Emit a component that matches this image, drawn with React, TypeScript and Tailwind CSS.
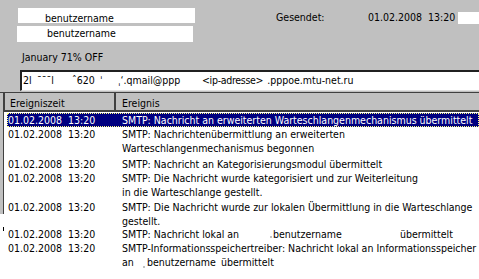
import React from 'react'

type Row = {
  date: string
  lines: React.ReactNode[]
  box: string
}

const Dot = ({ className }: { className: string }) => (
  <span className={`inline-block w-[2px] h-[2px] bg-[#c0c0c0] ${className}`} />
)

const rows: Row[] = [
  {
    date: '01.02.2008  13:20',
    lines: ['SMTP: Nachrichtenübermittlung an erweiterten', 'Warteschlangenmechanismus begonnen'],
    box: 'pb-[2px]',
  },
  {
    date: '01.02.2008  13:20',
    lines: ['SMTP: Nachricht an Kategorisierungsmodul übermittelt'],
    box: '',
  },
  {
    date: '01.02.2008  13:20',
    lines: ['SMTP: Die Nachricht wurde kategorisiert und zur Weiterleitung', 'in die Warteschlange gestellt.'],
    box: 'pb-[1px]',
  },
  {
    date: '01.02.2008  13:20',
    lines: ['SMTP: Die Nachricht wurde zur lokalen Übermittlung in die Warteschlange', 'gestellt.'],
    box: 'h-[27px]',
  },
  {
    date: '01.02.2008  13:20',
    lines: [
      <span className='flex items-end'>
        <span className='w-[148px]'>SMTP: Nachricht lokal an</span>
        <Dot className='mb-[3px] mr-[1px]' />
        <span className='w-[127px]'>benutzername</span>
        <span>übermittelt</span>
      </span>,
    ],
    box: '',
  },
  {
    date: '01.02.2008  13:20',
    lines: [
      'SMTP-Informationsspeichertreiber: Nachricht lokal an Informationsspeicher',
      <span className='flex items-end'>
        <span className='w-[21px]'>an</span>
        <Dot className='mb-[1px] mr-[2px]' />
        <span className='w-[74px]'>benutzername</span>
        <span>übermittelt</span>
      </span>,
    ],
    box: '',
  },
]

export default function App() {
  return (
    <div className="w-[479px] h-[279px] overflow-hidden bg-[#c0c0c0] text-black text-[10.5px] leading-[14px] font-['DejaVu_Sans_Condensed','Liberation_Sans',sans-serif] flex flex-col">
      {/* Kopf */}
      <div className='flex pt-[8px]'>
        <div className='flex flex-col pl-[17px] gap-[3px]'>
          <div className='ml-[1px] w-[177px] h-[15px] bg-white pl-[27px] pt-[3px] whitespace-nowrap'>benutzername</div>
          <div className='w-[176px] h-[16px] bg-white pl-[30px] whitespace-nowrap'>benutzername</div>
        </div>
        <div className='flex items-start ml-[81px] pt-[2px] whitespace-nowrap'>
          <span className='w-[92px]'>Gesendet:</span>
          <span className='w-[90px]'>01.02.2008&nbsp;&nbsp;13:20</span>
          <span className='w-[21px] h-[12px] mt-[2px] bg-white' />
        </div>
      </div>

      <div className='pl-[22px] mt-[8px]'>January 71% OFF</div>

      {/* Absenderzeile */}
      <div className='ml-[20px] mt-[6px] h-[21px] bg-white border-t-2 border-l-2 border-t-[#202020] border-l-[#202020] border-b border-b-[#dfdfdf] pl-[1px] pt-[1px] flex whitespace-nowrap'>
        <span className='w-[14px]'>2l</span>
        <span className='w-[35px]'>ˉˉˉl</span>
        <span className='w-[28px]'>ˆ620</span>
        <span className='w-[18px]'>ˈ</span>
        <span className='w-[84px]'>ˌ‘.qmail@ppp</span>
        <span className='tracking-[-0.3px]'>&lt;ip-adresse&gt;</span>
        <span className='ml-[4px]'>.pppoe.mtu-net.ru</span>
      </div>

      {/* Ereignisliste */}
      <div className='flex flex-1 mt-[1px] border-t border-[#404040]'>
        <div className='w-[4px] flex flex-col'>
          <div className='h-[121px] bg-[#c0c0c0] border-r border-[#404040]' />
          <div className='flex-1 bg-white pt-[13px]'>
            <div className='ml-[3px] w-[1px] h-[4px] bg-black' />
          </div>
        </div>
        <div className='flex-1 bg-white flex flex-col overflow-hidden'>
          <div className='flex h-[19px] bg-[#c0c0c0] border-b-2 border-[#404040] pt-[3px] shrink-0'>
            <div className='w-[112px] pl-[5px] border-l border-r-2 border-[#404040] -mt-[3px] pt-[3px]'>Ereigniszeit</div>
            <div className='pl-[6px]'>Ereignis</div>
          </div>

          <div className='pt-[1px] pl-[3px]'>
            <div className='flex h-[14px] bg-[#000080] text-white outline-1 outline-dotted outline-[#ffff80] -outline-offset-1 whitespace-nowrap'>
              <div className='w-[109px] pl-[1px] shrink-0'>01.02.2008&nbsp;&nbsp;13:20</div>
              <div className='pl-[6px]'>SMTP: Nachricht an erweiterten Warteschlangenmechanismus übermittelt</div>
            </div>
          </div>

          {rows.map((row, i) => (
            <div key={i} className={`flex whitespace-nowrap ${row.box}`}>
              <div className='w-[112px] pl-[4px] shrink-0'>{row.date.replace('  ', '\u00a0\u00a0')}</div>
              <div className='pl-[6px] flex flex-col'>
                {row.lines.map((line, j) => (
                  <div key={j}>{line}</div>
                ))}
              </div>
            </div>
          ))}
        </div>
      </div>
    </div>
  )
}
